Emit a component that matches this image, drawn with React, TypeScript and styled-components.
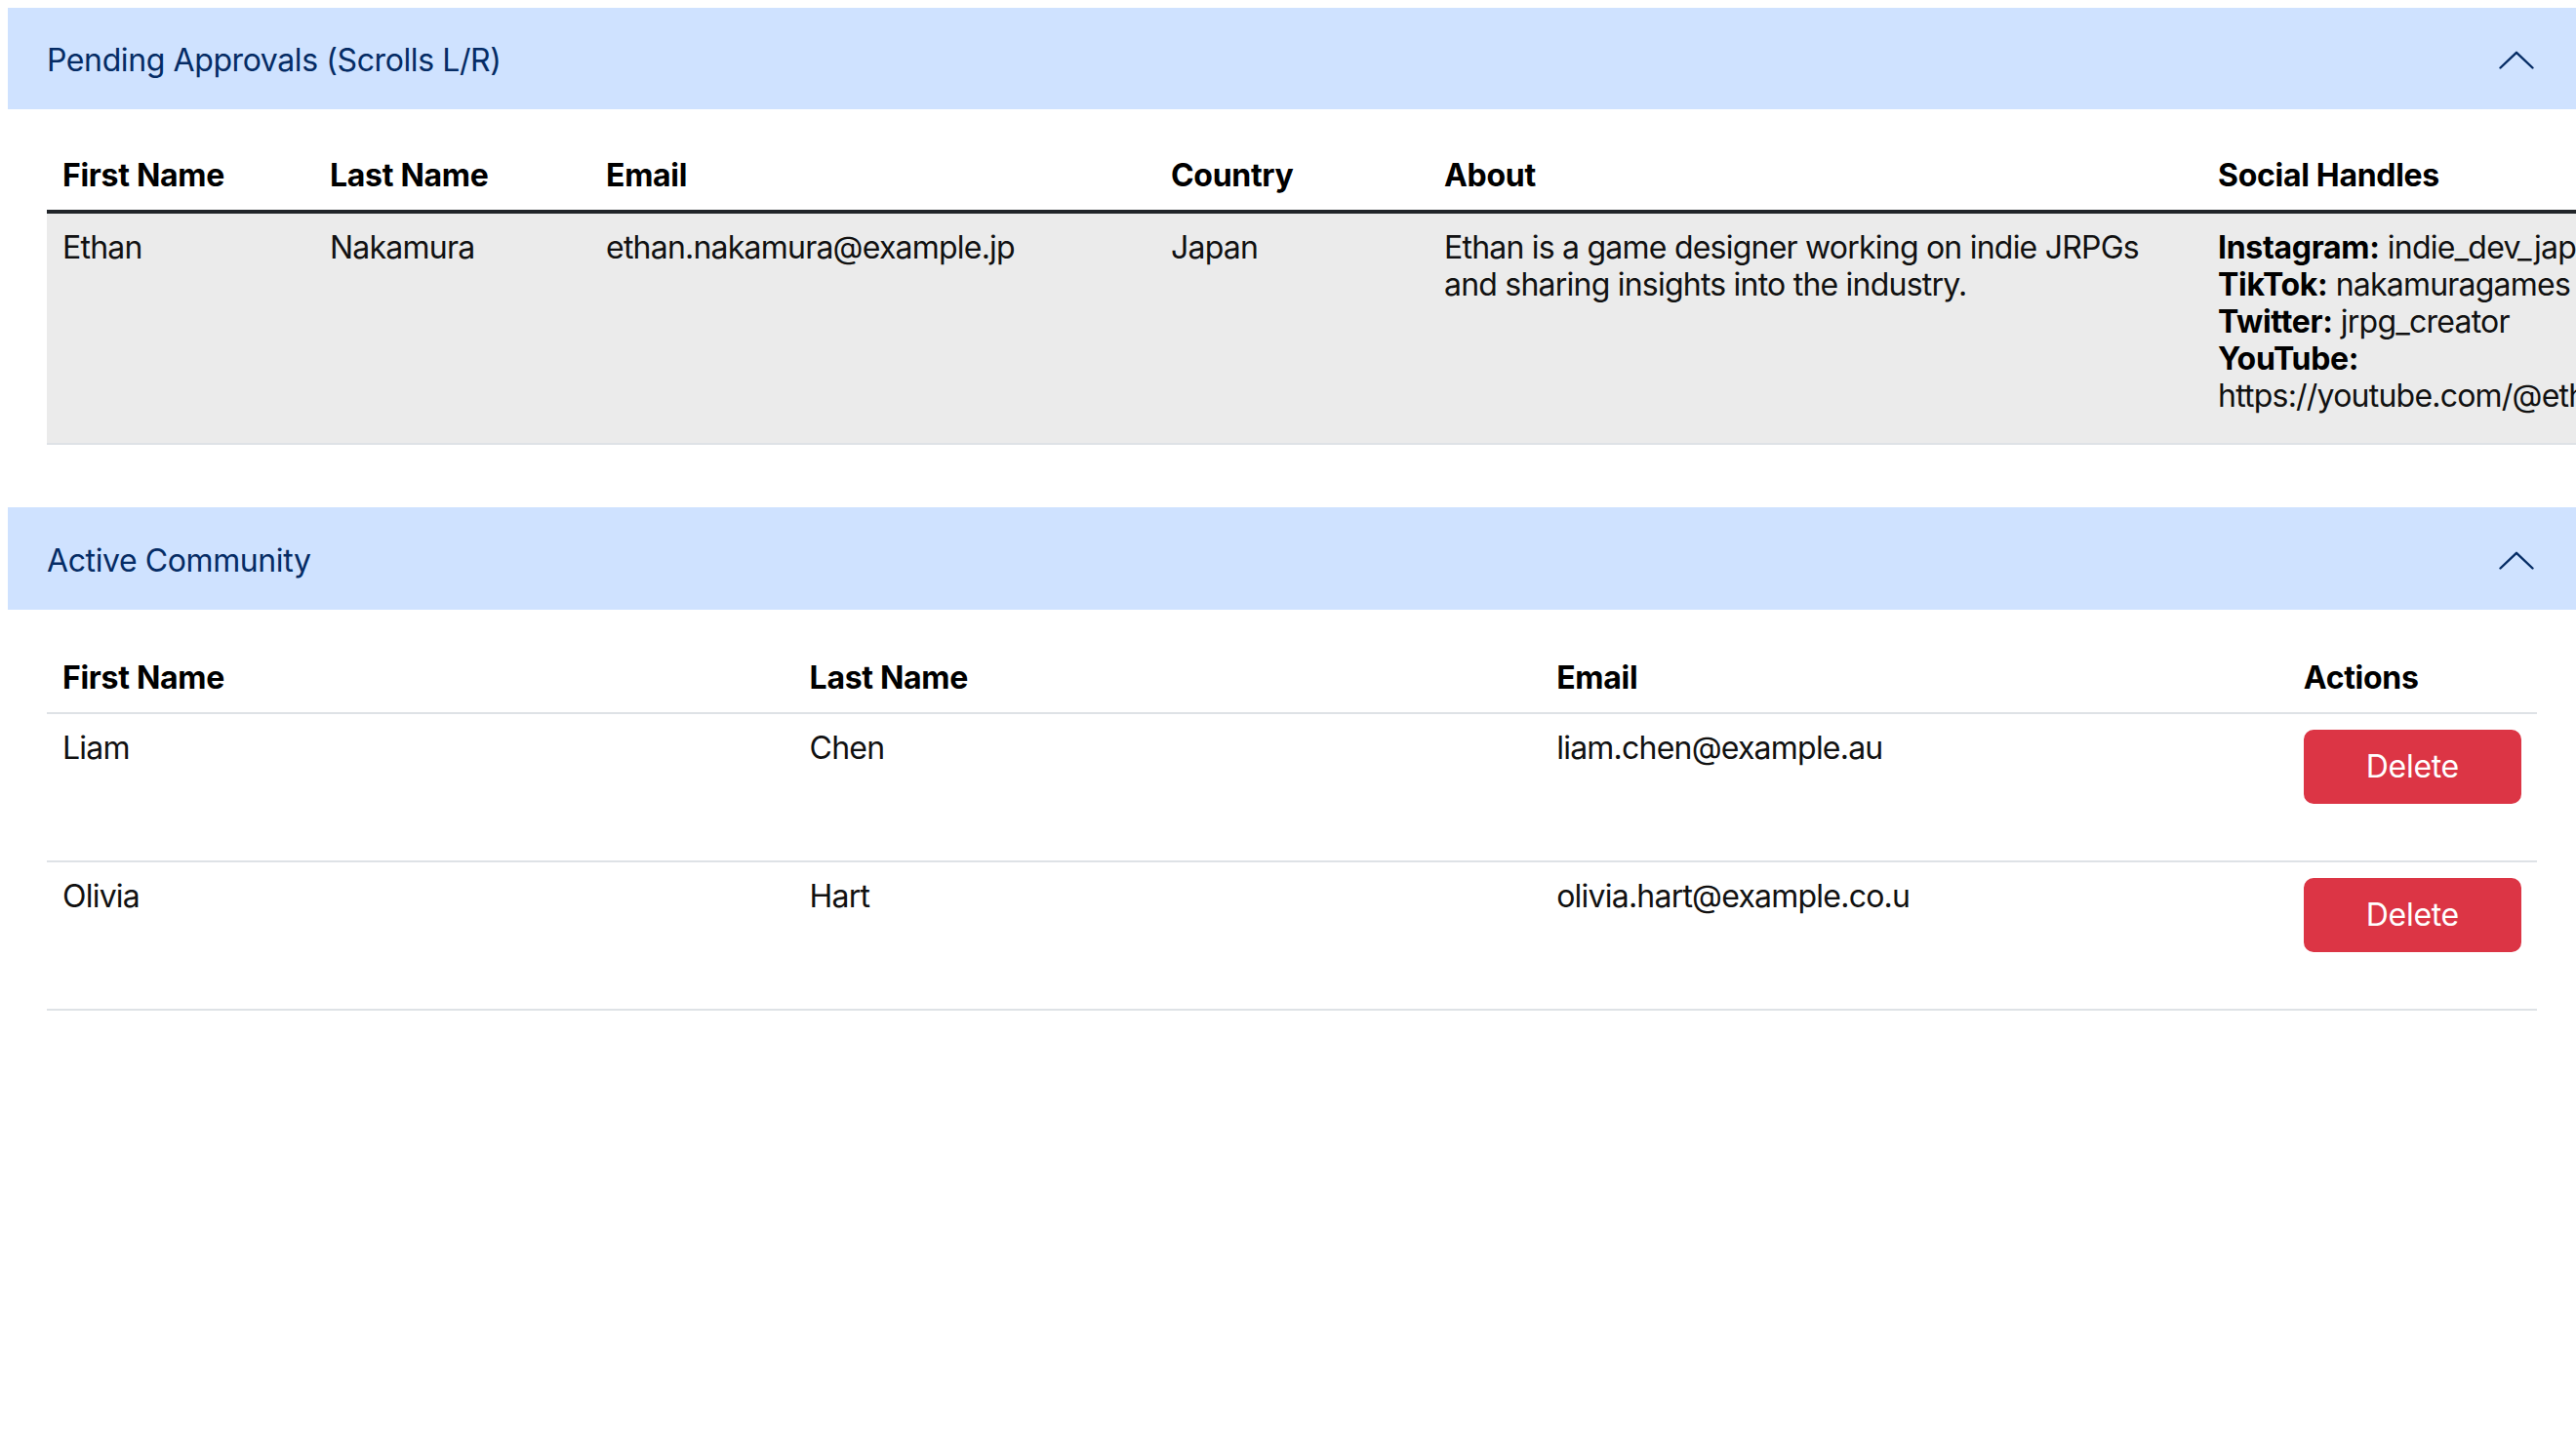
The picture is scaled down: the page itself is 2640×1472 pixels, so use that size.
import React from "react";
import styled, { createGlobalStyle } from "styled-components";

const GlobalStyle = createGlobalStyle`
  html, body { background: #ffffff; }
  body {
    margin: 8px 0 0 8px;
    font-family: Inter, "Noto Sans", "Liberation Sans", sans-serif;
    font-size: 32px;
    line-height: 38px;
    color: #212529;
    overflow: hidden;
  }
  * { box-sizing: border-box; }
`;

const Accordion = styled.div`
  width: 2632px;
  display: flex;
  flex-direction: column;
`;

const Section = styled.section`
  display: flex;
  flex-direction: column;
`;

const SectionHeader = styled.button<{ $tall?: boolean }>`
  display: flex;
  align-items: center;
  justify-content: space-between;
  width: 100%;
  height: ${(p) => (p.$tall ? 105 : 104)}px;
  padding: 34px 43px 30px 40px;
  border: none;
  background: #cfe2ff;
  color: #052c65;
  font-family: inherit;
  font-size: 32px;
  line-height: 40px;
  text-align: left;
  cursor: pointer;
`;

const Title = styled.span`
  letter-spacing: -0.4px;
`;

const Body = styled.div<{ $top?: number }>`
  padding: ${(p) => p.$top ?? 32}px 40px 64px;
`;

const Scroller = styled.div`
  margin-right: -40px;
  overflow-x: auto;
  scrollbar-width: none;
  &::-webkit-scrollbar { display: none; }
`;

const Table = styled.table<{ $wide?: boolean }>`
  border-collapse: collapse;
  table-layout: fixed;
  width: ${(p) => (p.$wide ? "2760px" : "100%")};
`;

const HeadRow = styled.tr<{ $strong?: boolean }>`
  border-bottom: ${(p) => (p.$strong ? "4px solid #212529" : "2px solid #dee2e6")};
`;

const Th = styled.th`
  padding: 17px 16px 16px;
  text-align: left;
  font-weight: 700;
  color: #000;
  vertical-align: bottom;
  letter-spacing: -0.3px;
`;

const Row = styled.tr<{ $shade?: boolean }>`
  background: ${(p) => (p.$shade ? "#ebebeb" : "transparent")};
  border-bottom: 2px solid #dee2e6;
`;

const Td = styled.td<{ $bottom?: number }>`
  padding: 16px 16px ${(p) => p.$bottom ?? 16}px;
  vertical-align: top;
  letter-spacing: -0.78px;
  color: #111;
`;

const Handles = styled.div`
  display: flex;
  flex-direction: column;
  white-space: normal;
`;

const HandleLine = styled.div`
  white-space: nowrap;
`;

const HandleWrap = styled.div``;

const Label = styled.strong`
  font-weight: 700;
  color: #000;
  letter-spacing: -0.3px;
`;

const DeleteButton = styled.button`
  display: block;
  width: 100%;
  height: 76px;
  padding: 12px 24px;
  border: 2px solid #dc3545;
  border-radius: 10px;
  background: #dc3545;
  color: #ffffff;
  font-family: inherit;
  font-size: 32px;
  line-height: 48px;
  letter-spacing: -0.3px;
  cursor: pointer;
`;

const Chevron = () => (
  <svg width="36" height="20" viewBox="0 0 36 20" fill="none">
    <polyline
      points="1.5,17.5 18,1.8 34.5,17.5"
      stroke="#052c65"
      strokeWidth="2.4"
      strokeLinecap="round"
      strokeLinejoin="round"
    />
  </svg>
);

const pendingCols = [274, 283, 579, 280, 793, 551];

const community = [
  { first: "Liam", last: "Chen", email: "liam.chen@example.au" },
  { first: "Olivia", last: "Hart", email: "olivia.hart@example.co.u" },
];

export default function App() {
  return (
    <>
      <GlobalStyle />
      <Accordion>
        <Section>
          <SectionHeader>
            <Title>Pending Approvals (Scrolls L/R)</Title>
            <Chevron />
          </SectionHeader>
          <Body>
            <Scroller>
              <Table $wide>
                <colgroup>
                  {pendingCols.map((w, i) => (
                    <col key={i} style={{ width: w }} />
                  ))}
                </colgroup>
                <thead>
                  <HeadRow $strong>
                    <Th>First Name</Th>
                    <Th>Last Name</Th>
                    <Th>Email</Th>
                    <Th>Country</Th>
                    <Th>About</Th>
                    <Th>Social Handles</Th>
                  </HeadRow>
                </thead>
                <tbody>
                  <Row $shade>
                    <Td $bottom={29}>Ethan</Td>
                    <Td $bottom={29}>Nakamura</Td>
                    <Td $bottom={29}>ethan.nakamura@example.jp</Td>
                    <Td $bottom={29}>Japan</Td>
                    <Td $bottom={29}>
                      Ethan is a game designer working on indie JRPGs and sharing insights into the industry.
                    </Td>
                    <Td $bottom={29}>
                      <Handles>
                        <HandleLine>
                          <Label>Instagram:</Label> indie_dev_japan
                        </HandleLine>
                        <HandleLine>
                          <Label>TikTok:</Label> nakamuragames
                        </HandleLine>
                        <HandleLine>
                          <Label>Twitter:</Label> jrpg_creator
                        </HandleLine>
                        <HandleWrap>
                          <Label>YouTube:</Label>
                          <br />
                          https://youtube.com/@ethannakamura
                        </HandleWrap>
                      </Handles>
                    </Td>
                  </Row>
                </tbody>
              </Table>
            </Scroller>
          </Body>
        </Section>
        <Section>
          <SectionHeader $tall>
            <Title>Active Community</Title>
            <Chevron />
          </SectionHeader>
          <Body $top={34}>
            <Table>
              <colgroup>
                <col style={{ width: "30%" }} />
                <col style={{ width: "30%" }} />
                <col style={{ width: "30%" }} />
                <col style={{ width: "10%" }} />
              </colgroup>
              <thead>
                <HeadRow>
                  <Th>First Name</Th>
                  <Th>Last Name</Th>
                  <Th>Email</Th>
                  <Th>Actions</Th>
                </HeadRow>
              </thead>
              <tbody>
                {community.map((m) => (
                  <Row key={m.email}>
                    <Td>{m.first}</Td>
                    <Td>{m.last}</Td>
                    <Td>{m.email}</Td>
                    <Td $bottom={58}>
                      <DeleteButton>Delete</DeleteButton>
                    </Td>
                  </Row>
                ))}
              </tbody>
            </Table>
          </Body>
        </Section>
      </Accordion>
    </>
  );
}
